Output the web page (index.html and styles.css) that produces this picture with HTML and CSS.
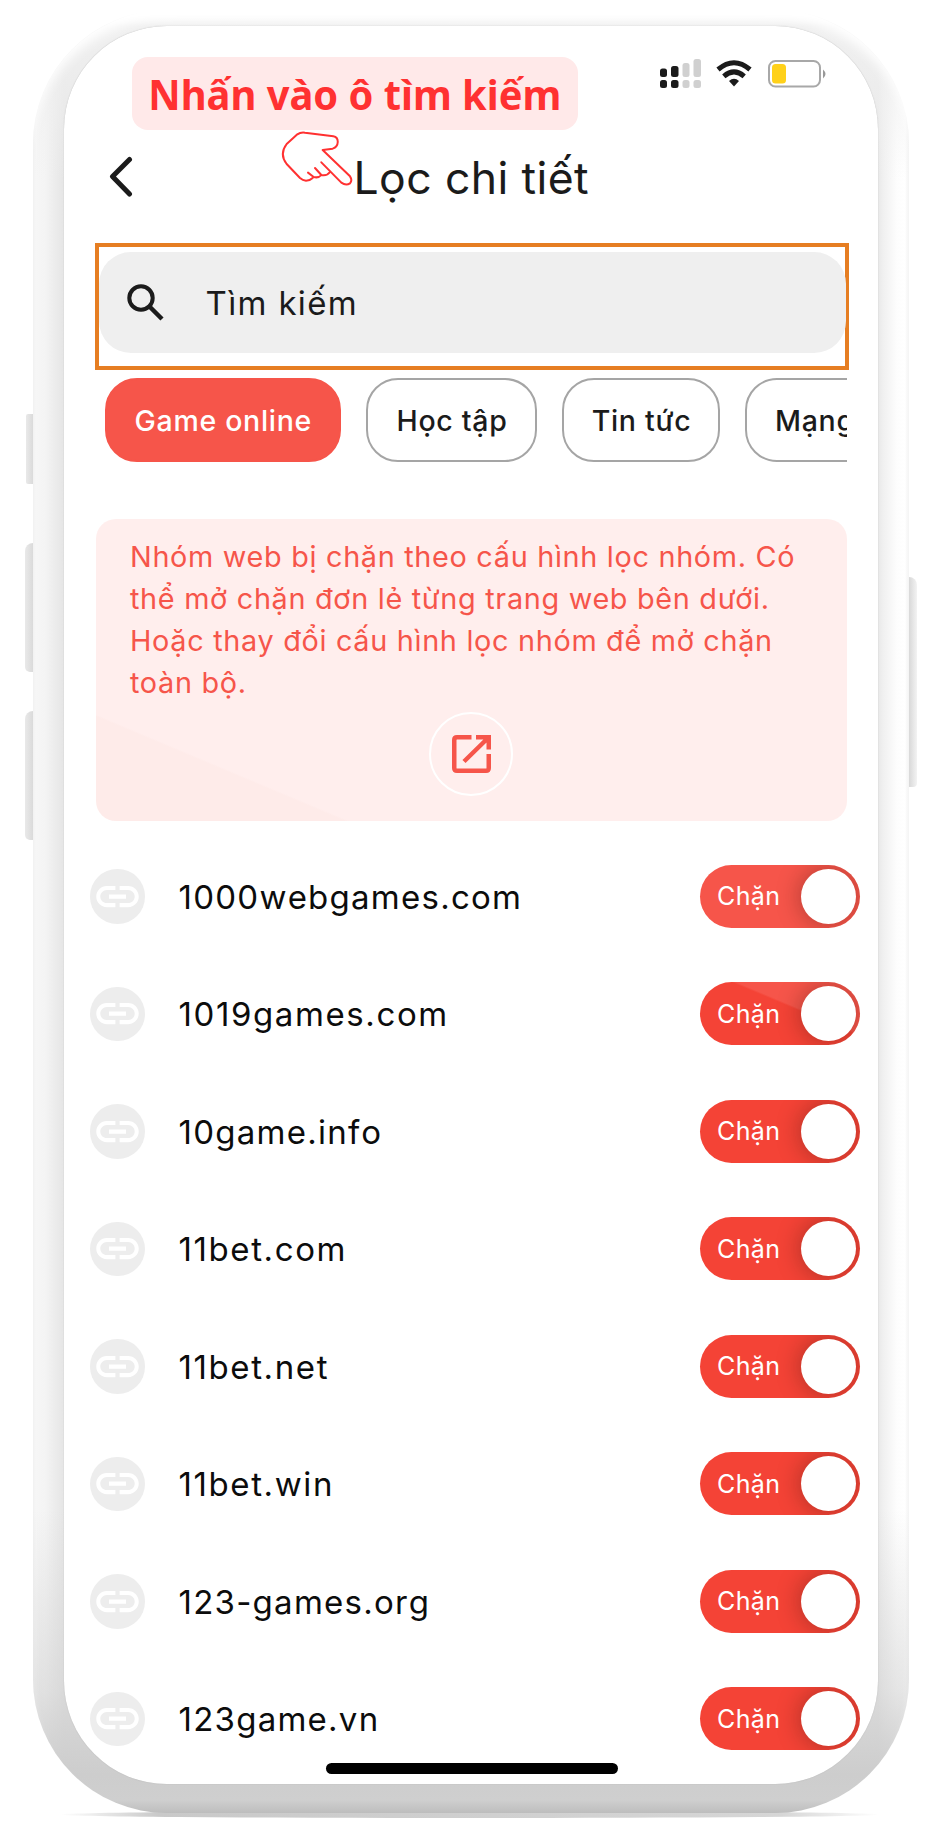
FILE: index.html
```
<!DOCTYPE html>
<html lang="vi">
<head>
<meta charset="utf-8">
<title>Lọc chi tiết</title>
<link rel="stylesheet" href="styles.css">
</head>
<body>
<svg class="defs" width="0" height="0">
  <symbol id="link" viewBox="0 0 24 24"><path d="M3.9 12c0-1.71 1.39-3.1 3.1-3.1h4V7H7c-2.76 0-5 2.24-5 5s2.24 5 5 5h4v-1.9H7c-1.71 0-3.1-1.39-3.1-3.1zM8 13h8v-2H8v2zm9-6h-4v1.900h4c1.710 0 3.100 1.390 3.100 3.100s-1.390 3.100-3.100 3.100h-4V17h4c2.760 0 5-2.240 5-5s-2.240-5-5-5z"/></symbol>
</svg>
<div class="stage">
  <i class="side side-mute"></i><i class="side side-up"></i><i class="side side-down"></i><i class="side side-power"></i>
  <i class="floor"></i>
  <div class="phone">
    <main class="screen">
      <div class="status">
        <svg class="signal" width="41" height="30" viewBox="0 0 41 30">
          <g fill="#1b1b1b"><rect x="0" y="9.500" width="7" height="8.500" rx="2.500"/><rect x="11" y="7" width="7.500" height="11" rx="2.500"/><rect x="0" y="21" width="7" height="8" rx="2.500"/><rect x="11" y="21" width="7.500" height="8" rx="2.500"/></g>
          <g fill="#d0d0d0"><rect x="22.500" y="4" width="7" height="14" rx="2.500"/><rect x="33.500" y="0" width="7.500" height="18" rx="2.500"/><rect x="22.500" y="21" width="7" height="8" rx="2.500"/><rect x="33.500" y="21" width="7.500" height="8" rx="2.500"/></g>
        </svg>
        <svg class="wifi" width="36" height="27" viewBox="0 0 36 27">
          <g fill="none" stroke="#1b1b1b" stroke-width="5"><path d="M2 9.500Q18 -4 34 9.500"/><path d="M7.800 16.300Q18 7.500 28.200 16.300"/></g>
          <path fill="#1b1b1b" d="M13 21q5-4.500 10 0l-5 5.500z"/>
        </svg>
        <svg class="battery" width="58" height="28" viewBox="0 0 58 28">
          <rect x="1" y="1" width="51" height="25.500" rx="6.500" fill="none" stroke="#a8a8a8" stroke-width="2"/>
          <rect x="4" y="4" width="14" height="19.500" rx="3.500" fill="#ffd11a"/>
          <path d="M55 9.500q5 4.500 0 9z" fill="#999"/>
        </svg>
      </div>
      <header class="header">
        <svg class="back" width="24" height="42" viewBox="0 0 24 42"><path d="M20.500 3.500 3.500 20.500 20.500 38" fill="none" stroke="#1b1b1b" stroke-width="5" stroke-linecap="round" stroke-linejoin="round"/></svg>
        <h1 class="title">Lọc chi tiết</h1>
      </header>
      <div class="focus">
        <div class="search">
          <svg width="37" height="37" viewBox="0 0 37 37" fill="none" stroke="#1b1b1b"><circle cx="14" cy="14" r="11.700" stroke-width="4"/><path d="M23 23 35 35" stroke-width="4.500"/></svg>
          <span class="search-text">Tìm kiếm</span>
        </div>
      </div>
      <nav class="chips">
        <span class="chip chip-on">Game online</span>
        <span class="chip chip-study">Học tập</span>
        <span class="chip chip-news">Tin tức</span>
        <span class="chip chip-social">Mạng</span>
      </nav>
      <section class="notice">
        <p class="notice-text">Nhóm web bị chặn theo cấu hình lọc nhóm. Có<br>thể mở chặn đơn lẻ từng trang web bên dưới.<br>Hoặc thay đổi cấu hình lọc nhóm để mở chặn<br>toàn bộ.</p>
        <span class="open">
          <svg width="39" height="38" viewBox="0 0 39 38" fill="none" stroke="#f6554a" stroke-width="4.500"><path d="M19.500 2.250H5Q2.250 2.250 2.250 5V33Q2.250 35.750 5 35.750H34Q36.750 35.750 36.750 33V19"/><path d="M24 2.250H36.750V14.500M35.500 3.500 12 26.500"/></svg>
        </span>
      </section>
      <ul class="sites">
        <li class="site"><span class="dot"><svg><use href="#link"/></svg></span><span class="name">1000webgames.com</span><span class="toggle toggle-light">Chặn<i class="knob"></i></span></li>
        <li class="site"><span class="dot"><svg><use href="#link"/></svg></span><span class="name name-wide">1019games.com</span><span class="toggle toggle-split">Chặn<i class="knob"></i></span></li>
        <li class="site"><span class="dot"><svg><use href="#link"/></svg></span><span class="name">10game.info</span><span class="toggle">Chặn<i class="knob"></i></span></li>
        <li class="site"><span class="dot"><svg><use href="#link"/></svg></span><span class="name name-wide">11bet.com</span><span class="toggle">Chặn<i class="knob"></i></span></li>
        <li class="site"><span class="dot"><svg><use href="#link"/></svg></span><span class="name name-wide">11bet.net</span><span class="toggle">Chặn<i class="knob"></i></span></li>
        <li class="site"><span class="dot"><svg><use href="#link"/></svg></span><span class="name name-wide">11bet.win</span><span class="toggle">Chặn<i class="knob"></i></span></li>
        <li class="site"><span class="dot"><svg><use href="#link"/></svg></span><span class="name">123-games.org</span><span class="toggle">Chặn<i class="knob"></i></span></li>
        <li class="site"><span class="dot"><svg><use href="#link"/></svg></span><span class="name">123game.vn</span><span class="toggle">Chặn<i class="knob"></i></span></li>
      </ul>
      <i class="home"></i>
    </main>
  </div>
  <div class="callout"><span class="callout-text">Nhấn vào ô tìm kiếm</span></div>
  <svg class="hand" width="72" height="56" viewBox="843 392 216 168" fill="none" stroke="#ff3131" stroke-width="6" stroke-linecap="round" stroke-linejoin="round">
    <path d="M938 533Q930 541 918 541 908 540 900 533L860 491Q837 461 860 431L892 402Q902 395 915 397L1000 408C1018 411 1018 438 998 445L968 449 1050 528Q1058 540 1050 549 1038 557 1024 547L964 486"/>
    <path d="M990 515Q982 527 964 524L945 503M964 524Q956 534 941 530L924 517"/>
  </svg>
</div>
</body>
</html>
```
FILE: styles.css
```
* { box-sizing: border-box; }
body { margin: 0; background: #fff; font-family: Inter, "Noto Sans", sans-serif; color: #1b1b1b; }
.defs { position: absolute; }
.stage { position: relative; width: 944px; height: 1825px; overflow: hidden; padding: 10px 35px 12px 33px; }

/* Phone body */
.phone {
  position: relative; height: 1803px; padding: 15.5px 31px 29.500px 31px; border-radius: 134px;
  box-shadow: inset 0 12px 12px -4px #fff;
  background:
    linear-gradient(180deg, #fff 0, #fff 3px, #f0f0f0 16px, rgba(250,250,250,0) 170px, rgba(205,205,205,0) 1500px, rgba(205,205,205,.5) 1680px, #cdcdcd 1765px, #cfcfcf 1790px, #bdbdbd 100%),
    linear-gradient(90deg, #eee 0, #f6f6f6 3px, #f4f4f4 12px, #e5e5e5 31px, #e5e5e5 50%, #e8e8e8 845px, #f0f0f0 850px, #fdfdfd 864px, #fff 872px, #f1f1f1 876px);
}
.side { position: absolute; background: linear-gradient(90deg, #e9e9e9, #dadada); }
.side-mute { left: 26px; top: 414px; width: 7px; height: 70px; border-radius: 2px 0 0 2px; }
.side-up { left: 25px; top: 543px; width: 8px; height: 129px; border-radius: 8px 0 0 5px; }
.side-down { left: 25px; top: 711px; width: 8px; height: 129px; border-radius: 8px 0 0 5px; }
.side-power { left: 909px; top: 577px; width: 8px; height: 210px; border-radius: 0 8px 4px 0; background: linear-gradient(90deg, #d8d8d8, #f3f3f3); }
.floor { position: absolute; left: 60px; top: 1811px; width: 820px; height: 7px; border-radius: 50%; background: linear-gradient(90deg, #fff, #c9c9c9 12%, #d6d6d6 88%, #fff); }
.screen {
  display: flex; flex-direction: column; height: 1758px; border-radius: 103px;
  background: #fff; padding: 0 18.500px 0 26px; box-shadow: 0 0 1px #aaa;
}

/* Status bar and title */
.status { height: 101px; display: flex; justify-content: flex-end; padding: 33.500px 34px 0 0; }
.wifi { margin: 1px 0 0 15.500px; }
.battery { margin: 1px 0 0 15.500px; }
.header { height: 99px; position: relative; display: flex; align-items: center; justify-content: center; }
.back { position: absolute; left: 19px; top: 29px; }
.title { margin: 0 7px 0 0; padding-top: 3px; font-size: 44.5px; font-weight: 400; letter-spacing: .4px; line-height: 54px; }

/* Search */
.focus { width: 754px; height: 127px; margin: 17.5px 0 0 5px; border: 4px solid #e67e22; padding-top: 4.500px; flex: none; }
.search { height: 101px; margin-right: -1px; background: #efefef; border-radius: 32px; display: flex; align-items: center; padding-left: 28px; }
.search-text { margin-left: 41.500px; font-size: 33px; letter-spacing: 1.350px; padding-top: 2px; }

/* Category chips */
.chips { display: flex; gap: 25px; margin: 8px 0 0 6px; padding-left: 8.500px; width: 751px; overflow: hidden; flex: none; }
.chip { flex: none; height: 84px; border: 2px solid #a5a5a5; border-radius: 32px; display: flex; align-items: center; justify-content: center; padding-left: 1px; font-size: 28.5px; font-weight: 450; letter-spacing: .7px; white-space: nowrap; }
.chip-on { width: 236.500px; background: #f6554a; border-color: #f6554a; color: #fff; }
.chip-study { width: 171px; }
.chip-news { width: 158px; }
.chip-social { width: 190px; padding-left: 28px; justify-content: flex-start; }

/* Notice */
.notice {
  flex: none; width: 751px; height: 302.500px; margin: 56.500px 0 0 6px; padding: 17.500px 0 0 34px; border-radius: 20px;
  background: linear-gradient(202.800deg, #ffeeed 471px, #feebe9 473px); color: #f6554a;
}
.notice-text { margin: 0; font-size: 28.800px; line-height: 42px; letter-spacing: .700px; white-space: nowrap; }
.open { width: 84px; height: 84px; margin: 7.500px 0 0 299px; border: 2px solid #fff; border-radius: 50%; display: flex; align-items: center; justify-content: center; }

/* Sites */
.sites { list-style: none; margin: 16.500px 0 0; padding: 0; }
.site { height: 117.500px; display: flex; align-items: center; }
.dot { width: 54.500px; height: 54.500px; border-radius: 50%; background: #ededed; display: flex; align-items: center; justify-content: center; }
.dot svg { width: 51px; height: 51px; fill: #fff; }
.name { flex: 1; margin-left: 34px; padding-top: 1px; font-size: 33px; letter-spacing: 1.250px; font-kerning: none; color: #0c0c0c; }
.name-wide { letter-spacing: 1.600px; }
.toggle { width: 160px; height: 63px; border-radius: 32px; background: #f44336; color: #fff; display: flex; align-items: center; justify-content: space-between; padding: 0 4px 0 17.500px; font-size: 25px; letter-spacing: .4px; overflow: hidden; }
.toggle-light { background: #f6554a; }
.toggle-split { background: linear-gradient(202.800deg, #f6554a 48px, #f44336 50px); }
.knob { width: 55px; height: 55px; border-radius: 50%; background: #fff; box-shadow: 0 0 24px rgba(60,20,10,.4); }
.home { width: 292px; height: 11px; border-radius: 6px; background: #000; margin: -15px 0 0 236px; flex: none; }

/* Instruction overlay */
.callout { position: absolute; left: 132px; top: 57px; width: 446px; height: 73px; border-radius: 16px; background: #ffe9e9; color: #ff3131; display: flex; align-items: center; justify-content: center; font: 700 42px/1 "Noto Sans", sans-serif; white-space: nowrap; }
.callout-text { transform: scaleX(.948); }
.hand { position: absolute; left: 281px; top: 130.700px; }
```
